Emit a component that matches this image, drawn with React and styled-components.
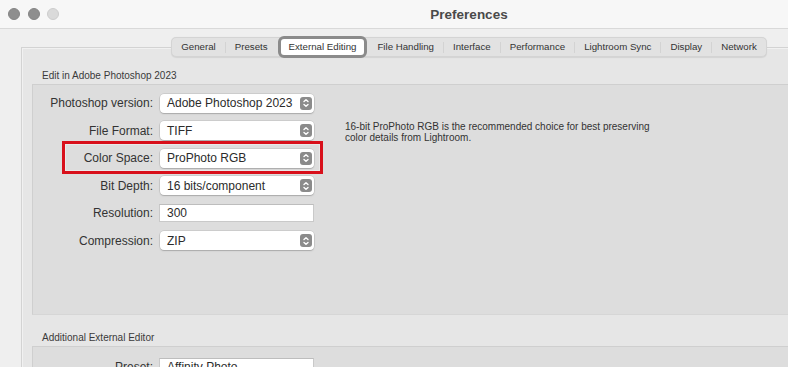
import { Fragment } from "react";
import styled, { createGlobalStyle } from "styled-components";

const GlobalStyle = createGlobalStyle`
    html, body {
        margin: 0;
        padding: 0;
        background: #ececec;
    }
    body {
        font-family: "Liberation Sans", Arial, sans-serif;
        color: #333;
    }
`;

const Screen = styled.div`
    width: 788px;
    height: 367px;
    overflow: hidden;
    background: #efefef;
`;

const Window = styled.div`
    width: 938px;
`;

const TitleBar = styled.div`
    display: grid;
    grid-template-columns: 1fr auto 1fr;
    align-items: center;
    height: 28px;
    background: #f7f7f7;
    border-bottom: 1px solid #d9d9d9;
`;

const Lights = styled.div`
    display: flex;
    gap: 7.5px;
    padding-left: 8px;
`;

const Light = styled.span`
    width: 12px;
    height: 12px;
    border-radius: 50%;
    box-sizing: border-box;
    background: ${({ $off }) => ($off ? "#dadada" : "#8e8e8e")};
    border: 1px solid ${({ $off }) => ($off ? "#cdcdcd" : "#858585")};
`;

const Title = styled.div`
    font-size: 13.5px;
    font-weight: 700;
    color: #4a4a4a;
`;

const Body = styled.div`
    padding-top: 8px;
    display: flex;
    flex-direction: column;
`;

const TabRow = styled.div`
    display: flex;
    justify-content: center;
    position: relative;
    z-index: 1;
`;

const Tabs = styled.div`
    display: flex;
    align-items: center;
    height: 18px;
    background: #e2e2e2;
    border: 1px solid #d4d4d4;
    border-radius: 5px;
    box-shadow: 0 0.5px 1px rgba(0, 0, 0, 0.08);
`;

const Tab = styled.div`
    display: flex;
    align-items: center;
    height: ${({ $active }) => ($active ? "16px" : "12px")};
    padding: 0 ${({ $active }) => ($active ? "8px" : "9px")};
    font-size: 9.7px;
    color: #333;
    background: ${({ $active }) => ($active ? "#fff" : "transparent")};
    border: ${({ $active }) => ($active ? "3px solid #8b8b8b" : "none")};
    border-radius: ${({ $active }) => ($active ? "6px" : "0")};
    line-height: 12px;
    white-space: nowrap;
`;

const Divider = styled.span`
    width: 1px;
    height: 11px;
    background: #d3d3d3;
    visibility: ${({ $hidden }) => ($hidden ? "hidden" : "visible")};
`;

const Panel = styled.div`
    margin: -10px 21px 0;
    padding: 22px 10px 0;
    height: 400px;
    background: #e6e6e6;
    border: 1px solid #d3d3d3;
    box-shadow: inset 1px 1px 0 #f1f1f1;
`;

const SectionTitle = styled.div`
    font-size: 10px;
    line-height: 12px;
    padding-left: 10px;
    margin: ${({ $first }) => ($first ? "0 0 2px" : "17px 0 2px")};
    color: #3a3a3a;
`;

const SectionBox = styled.div`
    display: flex;
    min-height: ${({ $height }) => $height}px;
    box-sizing: border-box;
    padding-top: ${({ $pad }) => $pad}px;
    background: #dddddd;
    border: 1px solid #cfcfcf;
    border-bottom-color: #d6d6d6;
`;

const Form = styled.div`
    display: flex;
    flex-direction: column;
    gap: 7.5px;
`;

const Row = styled.div`
    position: relative;
    display: flex;
    align-items: center;
    gap: 7px;
    height: 20px;

    ${({ $highlight }) =>
        $highlight &&
        `
        &::after {
            content: "";
            position: absolute;
            left: 29px;
            right: -9px;
            top: -7px;
            bottom: -6px;
            border: 3px solid #d8101b;
            box-shadow: inset 0 0 0 1px rgba(255, 255, 255, 0.35);
        }
    `}
`;

const Label = styled.div`
    width: 120px;
    text-align: right;
    font-size: 12px;
    color: #333;
    white-space: nowrap;
`;

const Popup = styled.div`
    display: flex;
    align-items: center;
    justify-content: space-between;
    width: 154px;
    height: 19px;
    box-sizing: border-box;
    padding: 0 2px 0 7px;
    background: #fff;
    border-radius: 4px;
    box-shadow: 0 0 0 0.5px rgba(0, 0, 0, 0.14), 0 1px 1.5px rgba(0, 0, 0, 0.18);
    font-size: 12px;
    color: #2b2b2b;
`;

const Stepper = styled.span`
    display: flex;
    align-items: center;
    justify-content: center;
    width: 12px;
    height: 13px;
    border-radius: 3px;
    background: #8b8b8b;
`;

const Field = styled.div`
    display: flex;
    align-items: center;
    width: 155px;
    height: 18px;
    box-sizing: border-box;
    margin-left: -1px;
    padding-left: 7px;
    background: #fff;
    border: 1px solid #c9c9c9;
    border-top-color: #bdbdbd;
    font-size: 12px;
    color: #2b2b2b;
`;

const Help = styled.div`
    margin: 28px 0 0 31px;
    font-size: 10px;
    line-height: 11px;
    color: #333;
    width: 320px;
`;

function Chevrons() {
    return (
        <svg width="8" height="10" viewBox="0 0 8 10" fill="none" stroke="#fff" strokeWidth="1.4" strokeLinecap="round" strokeLinejoin="round">
            <path d="M2 3.6 L4 1.8 L6 3.6" />
            <path d="M2 6.4 L4 8.2 L6 6.4" />
        </svg>
    );
}

function Select({ value }) {
    return (
        <Popup>
            <span>{value}</span>
            <Stepper>
                <Chevrons />
            </Stepper>
        </Popup>
    );
}

const tabs = [
    "General",
    "Presets",
    "External Editing",
    "File Handling",
    "Interface",
    "Performance",
    "Lightroom Sync",
    "Display",
    "Network",
];

const active = "External Editing";

export default function App() {
    return (
        <Screen>
            <GlobalStyle />
            <Window>
                <TitleBar>
                    <Lights>
                        <Light />
                        <Light />
                        <Light $off />
                    </Lights>
                    <Title>Preferences</Title>
                    <div />
                </TitleBar>
                <Body>
                    <TabRow>
                        <Tabs>
                            {tabs.map((t, i) => (
                                <Fragment key={t}>
                                    {i > 0 && (
                                        <Divider $hidden={t === active || tabs[i - 1] === active} />
                                    )}
                                    <Tab $active={t === active}>{t}</Tab>
                                </Fragment>
                            ))}
                        </Tabs>
                    </TabRow>
                    <Panel>
                        <SectionTitle $first>Edit in Adobe Photoshop 2023</SectionTitle>
                        <SectionBox $height={231} $pad={8}>
                            <Form>
                                <Row>
                                    <Label>Photoshop version:</Label>
                                    <Select value="Adobe Photoshop 2023" />
                                </Row>
                                <Row>
                                    <Label>File Format:</Label>
                                    <Select value="TIFF" />
                                </Row>
                                <Row $highlight>
                                    <Label>Color Space:</Label>
                                    <Select value="ProPhoto RGB" />
                                </Row>
                                <Row>
                                    <Label>Bit Depth:</Label>
                                    <Select value="16 bits/component" />
                                </Row>
                                <Row>
                                    <Label>Resolution:</Label>
                                    <Field>300</Field>
                                </Row>
                                <Row>
                                    <Label>Compression:</Label>
                                    <Select value="ZIP" />
                                </Row>
                            </Form>
                            <Help>
                                16-bit ProPhoto RGB is the recommended choice for best preserving
                                color details from Lightroom.
                            </Help>
                        </SectionBox>
                        <SectionTitle>Additional External Editor</SectionTitle>
                        <SectionBox $height={80} $pad={10}>
                            <Form>
                                <Row>
                                    <Label>Preset:</Label>
                                    <Field>Affinity Photo</Field>
                                </Row>
                            </Form>
                        </SectionBox>
                    </Panel>
                </Body>
            </Window>
        </Screen>
    );
}
